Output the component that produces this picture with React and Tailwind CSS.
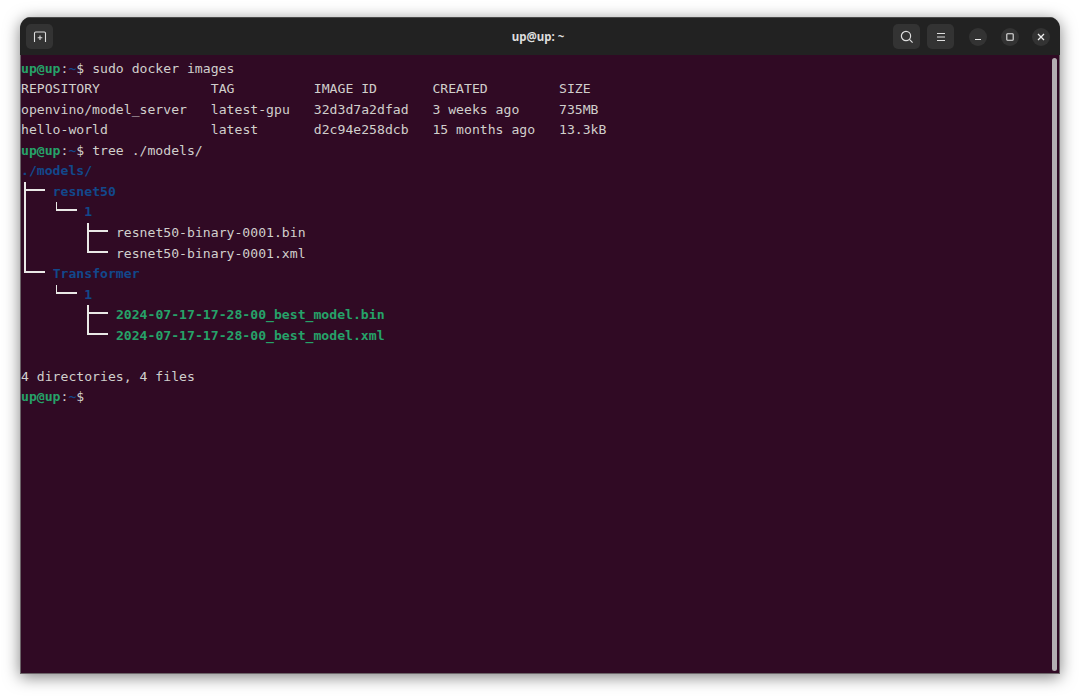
import React from 'react';

const COL = 7.91;
const MONO = 'font-["DejaVu_Sans_Mono",monospace] text-[13.14px] leading-[20.56px] whitespace-pre';

function Prompt({ children }) {
  return (
    <div>
      <span className="font-bold text-[#26a269]">up@up</span>
      <span>:</span>
      <span className="font-bold text-[#12488b]">~</span>
      <span>$ {children}</span>
    </div>
  );
}

// tree's box characters, the terminal joins them into solid lines
function Guide({ parts }) {
  const cols = parts.length * 4;
  return (
    <svg width={cols * COL} height="20.56" className="shrink-0 block overflow-visible" fill="none" stroke="#e9e8e6" strokeWidth="1.7" shapeRendering="crispEdges">
      {parts.map((p, i) => {
        const x = i * 4 * COL + 4;
        if (p === 'pipe') return <path key={i} d={`M${x} -0.5V21`} />;
        if (p === 'tee') return <path key={i} d={`M${x} -0.5V21M${x} 8H${x + 20}`} />;
        if (p === 'end') return <path key={i} d={`M${x} -0.5V8H${x + 20}`} />;
        return null;
      })}
    </svg>
  );
}

function TreeRow({ parts, color = '', children }) {
  return (
    <div className="flex">
      <Guide parts={parts} />
      <span className={color}>{children}</span>
    </div>
  );
}

function HeaderButton({ children }) {
  return (
    <div className="w-[27px] h-[25px] rounded-[5px] bg-[#333333] flex items-center justify-center">{children}</div>
  );
}

function WindowButton({ children }) {
  return (
    <div className="w-[18px] h-[18px] rounded-full bg-[#333333] flex items-center justify-center">{children}</div>
  );
}

const BLUE = 'font-bold text-[#12488b]';
const GREEN = 'font-bold text-[#26a269]';

export default function App() {
  return (
    <div className="w-[1080px] h-[697px] bg-white pt-[17px] pl-[20px] overflow-hidden">
      <div className="w-[1040px] h-[657px] flex flex-col rounded-t-[11px] overflow-hidden shadow-[0_3px_16px_rgba(0,0,0,0.5)]">
        <header className="h-[38px] shrink-0 bg-[#222222] border-t border-[#4a4a4a] grid grid-cols-[1fr_auto_1fr] items-center pl-[6px] pr-[10px]">
          <div className="flex">
            <HeaderButton>
              <svg width="14" height="14" viewBox="0 0 14 14" fill="none" stroke="#dddddd" strokeWidth="1.1">
                <path d="M1.5 12V3.2a1.2 1.2 0 0 1 1.2-1.2h8.6a1.2 1.2 0 0 1 1.2 1.2V12" />
                <path d="M7 5.5v4.6M4.7 7.8h4.6" />
              </svg>
            </HeaderButton>
          </div>
          <div className='font-["Noto_Sans",sans-serif] font-bold text-[11.5px] text-[#dedede]'>up@up: ~</div>
          <div className="flex items-center justify-end">
            <div className="flex items-center gap-[7px]">
              <HeaderButton>
                <svg width="14" height="14" viewBox="0 0 14 14" fill="none" stroke="#dddddd" strokeWidth="1.2">
                  <circle cx="6" cy="6" r="4.6" />
                  <path d="M9.4 9.4L12.6 12.6" />
                </svg>
              </HeaderButton>
              <HeaderButton>
                <svg width="12" height="12" viewBox="0 0 12 12" fill="none" stroke="#dddddd" strokeWidth="1.1">
                  <path d="M2 2.5H10M2 6H10M2 9.5H10" />
                </svg>
              </HeaderButton>
            </div>
            <div className="flex items-center gap-[13.5px] ml-[15px]">
              <WindowButton>
                <svg width="10" height="10" viewBox="0 0 10 10" fill="none" stroke="#e6e6e6" strokeWidth="1.1">
                  <path d="M2 7.5H8" />
                </svg>
              </WindowButton>
              <WindowButton>
                <svg width="10" height="10" viewBox="0 0 10 10" fill="none" stroke="#e6e6e6" strokeWidth="1.1">
                  <rect x="1.8" y="1.8" width="6.4" height="6.4" rx="0.8" />
                </svg>
              </WindowButton>
              <WindowButton>
                <svg width="10" height="10" viewBox="0 0 10 10" fill="none" stroke="#f0f0f0" strokeWidth="1.3">
                  <path d="M2 2L8 8M8 2L2 8" />
                </svg>
              </WindowButton>
            </div>
          </div>
        </header>

        <main className={`relative flex-1 bg-[#300a24] border-x border-b border-[#6b6468] pt-[3.5px] text-[#d0cfcc] ${MONO}`}>
          <Prompt>sudo docker images</Prompt>
          <div className="grid grid-cols-[189.8px_103px_118.6px_126.6px_1fr]">
            <span>REPOSITORY</span><span>TAG</span><span>IMAGE ID</span><span>CREATED</span><span>SIZE</span>
            <span>openvino/model_server</span><span>latest-gpu</span><span>32d3d7a2dfad</span><span>3 weeks ago</span><span>735MB</span>
            <span>hello-world</span><span>latest</span><span>d2c94e258dcb</span><span>15 months ago</span><span>13.3kB</span>
          </div>
          <Prompt>tree ./models/</Prompt>
          <div className={BLUE}>./models/</div>
          <TreeRow parts={['tee']} color={BLUE}>resnet50</TreeRow>
          <TreeRow parts={['pipe', 'end']} color={BLUE}>1</TreeRow>
          <TreeRow parts={['pipe', '', 'tee']}>resnet50-binary-0001.bin</TreeRow>
          <TreeRow parts={['pipe', '', 'end']}>resnet50-binary-0001.xml</TreeRow>
          <TreeRow parts={['end']} color={BLUE}>Transformer</TreeRow>
          <TreeRow parts={['', 'end']} color={BLUE}>1</TreeRow>
          <TreeRow parts={['', '', 'tee']} color={GREEN}>2024-07-17-17-28-00_best_model.bin</TreeRow>
          <TreeRow parts={['', '', 'end']} color={GREEN}>2024-07-17-17-28-00_best_model.xml</TreeRow>
          <div className="h-[20.56px]" />
          <div>4 directories, 4 files</div>
          <Prompt />
          <div className="absolute right-[2px] top-[3px] bottom-[2px] w-[5px] rounded-full bg-[#b3adb1]" />
        </main>
      </div>
    </div>
  );
}
